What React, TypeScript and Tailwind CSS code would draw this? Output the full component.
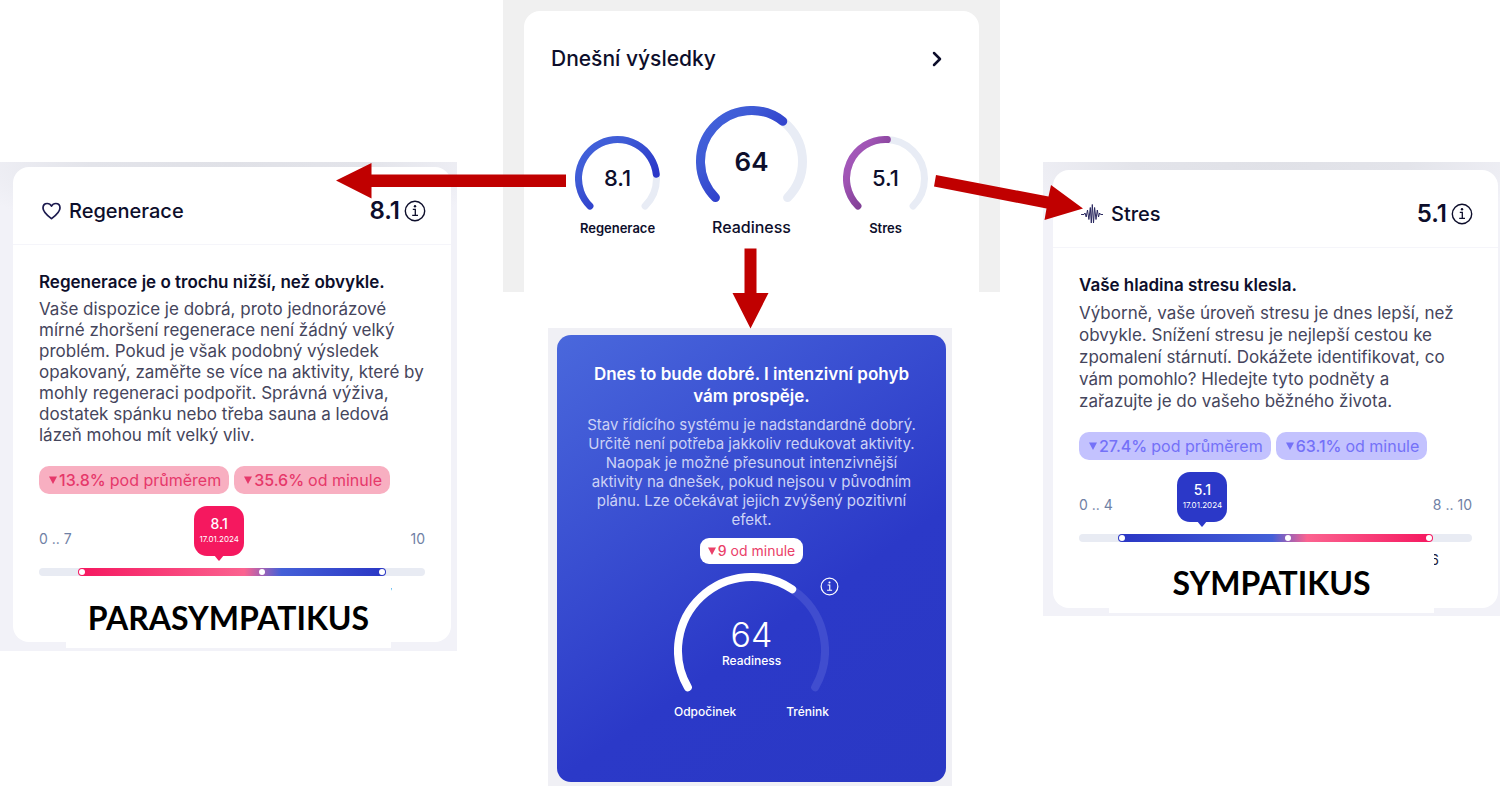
import type { ReactNode } from 'react';
import { ChevronRight } from 'lucide-react';
import { clsx } from 'clsx';

type Tone = 'pink' | 'indigo' | 'white';

const METRICS = {
  regenerace: {
    title: 'Regenerace',
    value: '8.1',
    heading: 'Regenerace je o trochu nižší, než obvykle.',
    text: [
      'Vaše dispozice je dobrá, proto jednorázové',
      'mírné zhoršení regenerace není žádný velký',
      'problém. Pokud je však podobný výsledek',
      'opakovaný, zaměřte se více na aktivity, které by',
      'mohly regeneraci podpořit. Správná výživa,',
      'dostatek spánku nebo třeba sauna a ledová',
      'lázeň mohou mít velký vliv.',
    ],
    badges: [
      ['13.8%', 'pod průměrem'],
      ['35.6%', 'od minule'],
    ],
    low: '0 .. 7',
    high: '10',
    limit: '7',
    marker: 46.7,
    middle: 57.8,
    caption: 'PARASYMPATIKUS',
  },
  stres: {
    title: 'Stres',
    value: '5.1',
    heading: 'Vaše hladina stresu klesla.',
    text: [
      'Výborně, vaše úroveň stresu je dnes lepší, než',
      'obvykle. Snížení stresu je nejlepší cestou ke',
      'zpomalení stárnutí. Dokážete identifikovat, co',
      'vám pomohlo? Hledejte tyto podněty a',
      'zařazujte je do vašeho běžného života.',
    ],
    badges: [
      ['27.4%', 'pod průměrem'],
      ['63.1%', 'od minule'],
    ],
    low: '0 .. 4',
    high: '8 .. 10',
    limit: '6',
    marker: 31.4,
    middle: 53.3,
    caption: 'SYMPATIKUS',
  },
};

type Metric = (typeof METRICS)['stres'];

const READINESS_TEXT = [
  'Stav řídícího systému je nadstandardně dobrý.',
  'Určitě není potřeba jakkoliv redukovat aktivity.',
  'Naopak je možné přesunout intenzivnější',
  'aktivity na dnešek, pokud nejsou v původním',
  'plánu. Lze očekávat jejich zvýšený pozitivní',
  'efekt.',
];

function arc(c: number, r: number, from: number, to: number) {
  const point = (deg: number) => {
    const a = (deg * Math.PI) / 180;
    return `${(c + r * Math.cos(a)).toFixed(2)} ${(c + r * Math.sin(a)).toFixed(2)}`;
  };
  return `M${point(from)} A${r} ${r} 0 ${to - from > 180 ? 1 : 0} 1 ${point(to)}`;
}

interface GaugeProps {
  id: string;
  size: number;
  height: number;
  stroke: number;
  start: number;
  value: number;
  colors: [string, string, string];
  track: string;
}

function Gauge({ id, size, height, stroke, start, value, colors, track }: GaugeProps) {
  const c = size / 2;
  const r = (size - stroke) / 2;
  const sweep = 2 * (270 - start);
  return (
    <svg width={size} height={height} viewBox={`0 0 ${size} ${height}`} fill="none" aria-hidden="true">
      <defs>
        <linearGradient id={id} x1="0" y1="0" x2="1" y2="1">
          <stop offset="0" stopColor={colors[0]} />
          <stop offset="0.3" stopColor={colors[1]} />
          <stop offset="0.75" stopColor={colors[2]} />
        </linearGradient>
      </defs>
      <path d={arc(c, r, start, start + sweep)} stroke={track} strokeWidth={stroke} strokeLinecap="round" />
      <path
        d={arc(c, r, start, start + sweep * value)}
        stroke={`url(#${id})`}
        strokeWidth={stroke}
        strokeLinecap="round"
      />
    </svg>
  );
}

function InfoIcon({ className }: { className?: string }) {
  return (
    <svg viewBox="0 0 22 22" fill="none" stroke="currentColor" className={className} aria-hidden="true">
      <circle cx="11" cy="11" r="9.7" strokeWidth="1.4" />
      <path d="M8.8 9.3h2.500v6M8.200 15.400h5.800" strokeWidth="1.3" />
      <circle cx="11" cy="6.300" r="1.200" fill="currentColor" stroke="none" />
    </svg>
  );
}

function HeartIcon() {
  return (
    <svg width="20" height="20" viewBox="0 0 20 20" fill="none" stroke="#1c1a4e" aria-hidden="true">
      <path
        d="M10.500 17.700C7 15 2 11.300 2 7c0-2.700 1.800-4.500 4.200-4.500 1.900 0 3.400 1 4.300 2.700.9-1.700 2.400-2.700 4.300-2.700C17.200 2.500 19 4.300 19 7c0 4.300-5 8-8.500 10.700Z"
        strokeWidth="1.7"
        strokeLinejoin="round"
      />
    </svg>
  );
}

function WaveIcon() {
  return (
    <svg width="22" height="20" viewBox="0 0 22 20" fill="none" stroke="#2b2960" aria-hidden="true">
      <path
        d="M.5 10.500H3l1-1.500 1.200 4L6.500 6l1.400 9.500L9.300 3.500l1 15.500L11.300.500l1.200 18.500 1.100-15.500L15 15.500 16.300 6l1.200 7 1.100-4 1 1.500h2.200"
        strokeWidth="1"
        strokeLinejoin="round"
        strokeLinecap="round"
      />
    </svg>
  );
}

function Badge({ tone, amount, children }: { tone: Tone; amount: string; children: ReactNode }) {
  return (
    <span
      className={clsx(
        'flex items-center whitespace-nowrap',
        tone === 'pink' && 'h-7 rounded-[10px] bg-[#f8afc1] pr-2 pl-2.5 text-base text-[#e6386a]',
        tone === 'indigo' && 'h-7 rounded-[10px] bg-[#c3c2fe] pr-2 pl-2.5 text-base text-[#7471f8]',
        tone === 'white' && 'h-[26px] rounded-[9px] bg-white px-2 text-sm text-[#ea4068]'
      )}
    >
      <svg viewBox="0 0 8 8" className="mr-0.5 size-2" fill="currentColor" aria-hidden="true">
        <path d="M0 .5h8L4 8Z" />
      </svg>
      <span className="mr-1 font-medium">{amount}</span>
      {children}
    </span>
  );
}

function Scale({ metric, tone }: { metric: Metric; tone: Tone }) {
  return (
    <div className="relative mt-3 pt-[23px]">
      <div className="flex h-5 items-center justify-between text-sm text-[#7081a5]">
        <span>{metric.low}</span>
        <span>{metric.high}</span>
      </div>

      {/* Marker with today's value */}
      <div
        className={clsx(
          'absolute top-0 flex h-[50px] w-[50px] -translate-x-1/2 flex-col items-center rounded-[13px] pt-2 text-white',
          tone === 'pink' ? 'bg-[#f5185f]' : 'bg-[#2b38c8]'
        )}
        style={{ left: `${metric.marker}%` }}
      >
        <span className="text-sm leading-5 font-medium">{metric.value}</span>
        <span className="text-[8px] leading-[10px]">17.01.2024</span>
        <svg
          viewBox="0 0 10 6"
          className={clsx('absolute top-[49px] h-1.5 w-2.5', tone === 'pink' ? 'text-[#f5185f]' : 'text-[#2b38c8]')}
          fill="currentColor"
          aria-hidden="true"
        >
          <path d="M0 0h10L5.500 5.600q-.5.500-1 0Z" />
        </svg>
      </div>

      <div className="relative mt-[19px] h-2 rounded-full bg-[#e8ebf3]">
        <div
          className={clsx(
            'absolute inset-y-0 right-[10%] left-[10%] rounded-full',
            tone === 'pink'
              ? 'bg-[linear-gradient(90deg,#f5175f_0%,#fb6390_54%,#4460d8_66%,#2a36c4_100%)]'
              : 'bg-[linear-gradient(90deg,#2a36c4_0%,#4460d8_49%,#fb6390_60%,#f5175f_100%)]'
          )}
        >
          <span className="absolute top-px left-px size-1.5 rounded-full bg-white" />
          <span className="absolute top-px right-px size-1.5 rounded-full bg-white" />
        </div>
        <span
          className="absolute top-px size-1.5 -translate-x-1/2 rounded-full bg-white"
          style={{ left: `${metric.middle}%` }}
        />
        <span className="absolute top-4 right-[33px] text-sm leading-5 text-[#20203c]">{metric.limit}</span>
      </div>
    </div>
  );
}

interface MetricPanelProps {
  metric: Metric;
  tone: Tone;
  icon: ReactNode;
  className?: string;
  textClassName?: string;
}

function MetricPanel({ metric, tone, icon, className, textClassName }: MetricPanelProps) {
  return (
    <section
      className={clsx(
        'relative mt-[162px] self-start bg-[#f2f2f8] bg-[radial-gradient(60%_16%_at_50%_0%,#e0e1e7_0%,#e3e4ea_50%,#f2f2f8_100%)]',
        className
      )}
    >
      <div className="rounded-2xl bg-white pb-[66px]">
        <header className="flex h-[78px] items-center justify-between border-b border-[#f5f5fa] pt-[11px] pr-[25px] pl-7">
          <h2 className="flex items-center gap-2 text-xl font-medium">
            {icon}
            {metric.title}
          </h2>
          <div className="flex items-center gap-1">
            <span className="text-2xl font-semibold">{metric.value}</span>
            <button type="button" aria-label="Info">
              <InfoIcon className="size-[22px]" />
            </button>
          </div>
        </header>

        <div className="pt-[26px] pr-[26px] pl-[26px]">
          <h3 className="text-[17px] leading-[22px] font-semibold whitespace-nowrap">{metric.heading}</h3>
          <p className={clsx('mt-1.5 text-[17px] whitespace-pre text-[#45455c]', textClassName)}>
            {metric.text.join('\n')}
          </p>
          <div className="mt-5 flex gap-[5px]">
            {metric.badges.map(([amount, label]) => (
              <Badge key={label} tone={tone} amount={amount}>
                {label}
              </Badge>
            ))}
          </div>
          <Scale metric={metric} tone={tone} />
        </div>
      </div>

      <div className="absolute right-[66px] bottom-[3px] left-[66px] flex h-[60px] items-center justify-center bg-white font-[Lato,sans-serif] text-[32px] font-bold text-black">
        {metric.caption}
      </div>
    </section>
  );
}

function ResultGauge({ label, value, children }: { label: string; value: string; children: ReactNode }) {
  return (
    <div className="relative flex w-[85px] flex-col items-center">
      {children}
      <span className="absolute top-8 text-[22px] leading-5 font-medium">{value}</span>
      <span className="mt-[7px] text-[13px] leading-5 font-semibold">{label}</span>
    </div>
  );
}

function TodayResults() {
  return (
    <section className="bg-[#f0f0f0] px-[21px] pt-[11px]">
      <div className="h-[281px] rounded-t-2xl bg-white">
        <header className="flex items-center justify-between pt-8 pr-[30px] pl-[27px]">
          <h2 className="text-[21px] leading-8 font-medium">Dnešní výsledky</h2>
          <button type="button" aria-label="Zobrazit výsledky">
            <ChevronRight className="size-6" strokeWidth={2.5} />
          </button>
        </header>

        <div className="mt-[31px] flex items-end justify-center gap-9">
          <ResultGauge label="Regenerace" value="8.1">
            <Gauge id="regenerace" size={85} height={75} stroke={7} start={135} value={0.81} colors={['#4262dc', '#3f5cd6', '#2a36c8']} track="#e8ecf5" />
          </ResultGauge>
          <div className="relative flex flex-col items-center">
            <Gauge id="readiness" size={111} height={98} stroke={9} start={135} value={0.64} colors={['#4262dc', '#3f5cd6', '#2a36c8']} track="#e8ecf5" />
            <span className="absolute top-10 text-[26px] leading-8 font-semibold">64</span>
            <span className="mt-3 text-base leading-[22px] font-medium">Readiness</span>
          </div>
          <ResultGauge label="Stres" value="5.1">
            <Gauge id="stres" size={85} height={75} stroke={7} start={135} value={0.51} colors={['#a65cc0', '#a054b4', '#7c3c90']} track="#e8ecf5" />
          </ResultGauge>
        </div>
      </div>
    </section>
  );
}

function ReadinessCard() {
  return (
    <section className="mt-9 mr-12 ml-[45px] bg-[#f0f0f5] pt-[7px] pr-1.5 pb-1 pl-[9px]">
      <div className="flex h-[447px] flex-col items-center rounded-[14px] bg-[linear-gradient(145deg,#4a68dc_0%,#2b39c8_62%,#2a38c4_100%)] pt-7 text-center text-white">
        <h2 className="text-[17px] leading-[22px] font-semibold">
          Dnes to bude dobré. I intenzivní pohyb
          <br />
          vám prospěje.
        </h2>
        <p className="mt-2 text-[15px] leading-[19px] whitespace-pre text-[#ccd2f5]">
          {READINESS_TEXT.join('\n')}
        </p>
        <div className="mt-[9px]">
          <Badge tone="white" amount="9">
            od minule
          </Badge>
        </div>

        <div className="relative mt-[9px] flex flex-col items-center">
          <Gauge id="readiness-detail" size={155} height={119} stroke={8} start={150} value={0.64} colors={['#fff', '#fff', '#fff']} track="#404dcf" />
          <span className="absolute top-[45px] text-[34px] leading-[34px] font-light">64</span>
          <span className="absolute top-20 text-xs leading-4 font-medium">Readiness</span>
          <button type="button" aria-label="Info" className="absolute top-1 -right-2.5">
            <InfoIcon className="size-[19px]" />
          </button>
          <div className="mt-3 flex w-full justify-between text-xs leading-4 font-medium">
            <span>Odpočinek</span>
            <span>Trénink</span>
          </div>
        </div>
      </div>
    </section>
  );
}

export default function App() {
  return (
    <main className="relative grid grid-cols-[457fr_46fr_497fr_43fr_457fr] overflow-hidden bg-white font-[Inter,sans-serif] text-[#0d0e2b]">
      <MetricPanel
        metric={METRICS.regenerace}
        tone="pink"
        icon={<HeartIcon />}
        className="col-start-1 pt-[5px] pr-1.5 pb-[9px] pl-[13px]"
        textClassName="leading-[21px]"
      />
      <div className="col-start-3">
        <TodayResults />
        <ReadinessCard />
      </div>
      <MetricPanel
        metric={METRICS.stres}
        tone="indigo"
        icon={<WaveIcon />}
        className="col-start-5 pt-2 pr-0.5 pb-2 pl-2.5"
        textClassName="leading-[22px]"
      />

      {/* Arrows from the gauges to their detail cards */}
      <svg viewBox="0 0 1500 786" className="pointer-events-none absolute inset-x-0 top-0 w-full" fill="#c00000" aria-hidden="true">
        <path d="M336 180.500 371.500 163v11.500H566v12.500H371.500v11.500Z" />
        <path d="M744.500 248.500h12V293h12L750.500 328.500 732.500 293h12Z" />
        <path d="M936 175l112.500 21.500 2.500-11.500L1083 208.500l-38.500 11.500 2-11.500L934 186.500Z" />
      </svg>
    </main>
  );
}
